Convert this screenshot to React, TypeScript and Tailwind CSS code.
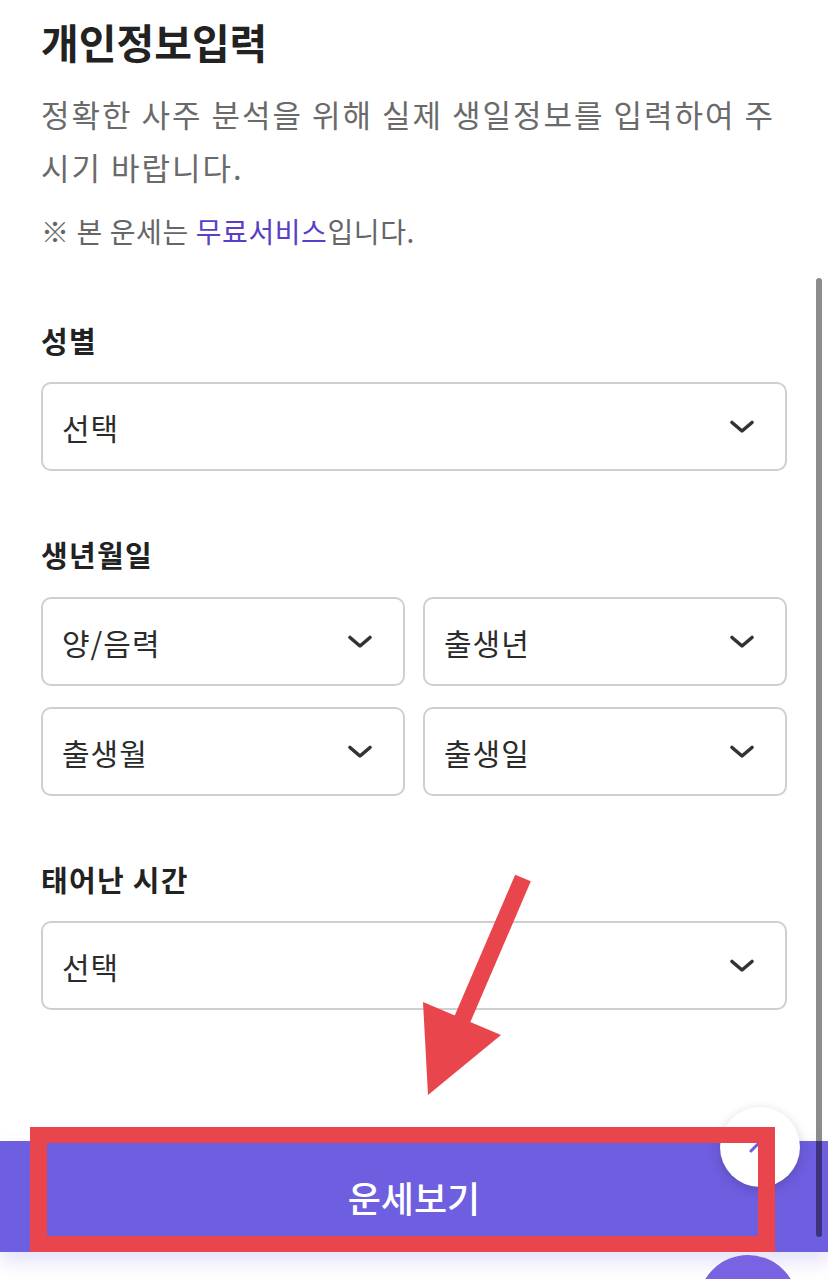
import React from "react";

const font = "font-['Noto_Sans_CJK_KR','Noto_Sans',sans-serif]";

function Chevron() {
  return (
    <svg width="26" height="16" viewBox="0 0 26 16" fill="none">
      <path
        d="M3 3.5 L13 12 L23 3.5"
        stroke="#333"
        strokeWidth="3.6"
        strokeLinecap="round"
        strokeLinejoin="round"
      />
    </svg>
  );
}

function Select({ label }: { label: string }) {
  return (
    <div className="flex h-[89px] items-center justify-between rounded-[10px] border-2 border-[#cfcfcf] bg-white pl-[19px] pr-[30px]">
      <span className="text-[30px] leading-none tracking-[1px] text-[#2b2b2b]">{label}</span>
      <Chevron />
    </div>
  );
}

function Label({ children }: { children: React.ReactNode }) {
  return (
    <h3 className="text-[29px] font-bold leading-[39px] tracking-[1.3px] text-[#222]">
      {children}
    </h3>
  );
}

export default function App() {
  return (
    <div className={`relative h-[1279px] w-full overflow-hidden bg-white ${font}`}>
      {/* form content */}
      <div className="px-[41px] pt-[15px]">
        <h1 className="text-[41px] font-bold leading-[52px] text-[#222]">
          개인정보입력
        </h1>
        <p className="mt-[20px] text-[31px] leading-[53px] tracking-[2px] text-[#6a6a6a]">
          정확한 사주 분석을 위해 실제 생일정보를 입력하여 주시기 바랍니다.
        </p>
        <p className="mt-[18px] text-[28px] leading-[40px] tracking-[0.6px] text-[#666]">
          ※ 본 운세는 <span className="text-[#5a3fc6]">무료서비스</span>
          입니다.
        </p>

        <section className="mt-[70px]">
          <Label>성별</Label>
          <div className="mt-[22px]">
            <Select label="선택" />
          </div>
        </section>

        <section className="mt-[64px]">
          <Label>생년월일</Label>
          <div className="mt-[23px] grid grid-cols-2 gap-x-[18px] gap-y-[21px]">
            <Select label="양/음력" />
            <Select label="출생년" />
            <Select label="출생월" />
            <Select label="출생일" />
          </div>
        </section>

        <section className="mt-[64px]">
          <Label>태어난 시간</Label>
          <div className="mt-[22px]">
            <Select label="선택" />
          </div>
        </section>
      </div>

      {/* bottom action bar */}
      <div className="mt-[131px] flex h-[111px] items-center justify-center bg-[#6e5ee0] shadow-[0_10px_18px_rgba(110,94,224,0.18)]">
        <span className="text-[36px] font-medium text-white">운세보기</span>
      </div>

      {/* floating buttons */}
      <div className="absolute left-[720px] top-[1107px] flex h-[80px] w-[80px] items-center justify-center rounded-full bg-white shadow-[0_3px_12px_rgba(0,0,0,0.18)]">
        <svg width="24" height="16" viewBox="0 0 24 16" fill="none">
          <path
            d="M3 12 L12 3 L21 12"
            stroke="#6e5ee0"
            strokeWidth="3"
            strokeLinecap="round"
            strokeLinejoin="round"
          />
        </svg>
      </div>
      <div className="absolute left-[698px] top-[1255px] h-[100px] w-[100px] rounded-full bg-[#7a63e3]" />

      {/* scrollbar */}
      <div className="absolute left-[816px] top-[278px] h-[959px] w-[6px] rounded-full bg-black/45" />

      {/* red annotations */}
      <div className="absolute left-[30px] top-[1127px] h-[125px] w-[745px] border-x-[17px] border-y-[16px] border-[#e8464c]" />
      <svg
        className="pointer-events-none absolute left-0 top-0"
        width="828"
        height="1279"
        viewBox="0 0 828 1279"
      >
        <line x1="523" y1="878" x2="462" y2="1020" stroke="#e8464c" strokeWidth="17" />
        <polygon points="423,1002 501,1035 428,1095" fill="#e8464c" />
      </svg>
    </div>
  );
}
